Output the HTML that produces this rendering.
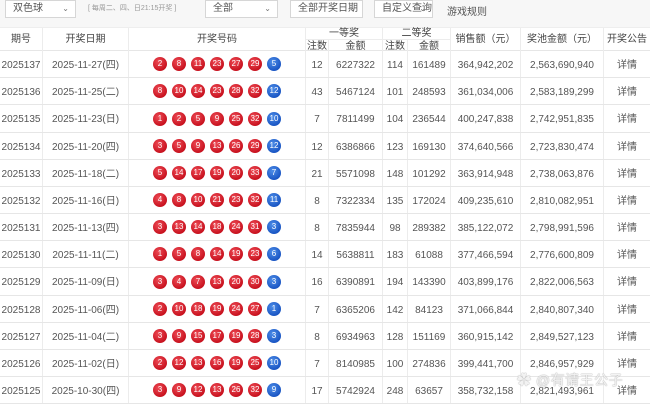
<!DOCTYPE html>
<html><head><meta charset="utf-8"><style>
*{margin:0;padding:0;box-sizing:border-box}
body{width:650px;height:403px;overflow:hidden;background:#fff;font-family:"Liberation Sans","Noto Sans CJK SC",sans-serif;color:#555;font-size:10px;position:relative}
.top{position:absolute;left:0;top:0;width:650px;height:27px;background:#f7f7f7}
.sel{position:absolute;top:0;height:18px;border:1px solid #d6d6d6;background:#fff;font-size:10px;line-height:16px;padding-left:7px;color:#555}
.sel i{position:absolute;right:6px;top:0;font-style:normal;font-size:8px;color:#777}
.row{position:absolute;left:0;width:650px;display:flex;border-bottom:1px solid #e6e6e6;background:#fff}
.c{border-right:1px solid #ececec;display:flex;align-items:center;justify-content:center;height:100%;white-space:nowrap;line-height:12px}
.c span{display:block;height:12px;line-height:12px;margin-top:3px}
.c:last-child{border-right:none}
.b{width:14px;height:14px;border-radius:50%;color:#fff;font-size:8px;line-height:14px;text-align:center;margin:0 2.5px;background:radial-gradient(circle at 40% 35%,#ee4b55,#c8121f 70%)}
.bl{background:radial-gradient(circle at 40% 35%,#4e8ee8,#1a56c4 70%)}
.hd{position:absolute;top:27px;left:0;width:650px;height:24px;background:#fff;border-bottom:1px solid #e6e6e6;border-top:1px solid #eee}
.h{position:absolute;top:0;height:23px;border-right:1px solid #ececec;display:flex;align-items:center;justify-content:center;color:#444;line-height:12px}
.h2{position:absolute;height:12px;display:flex;align-items:center;justify-content:center;color:#444;border-right:1px solid #ececec;line-height:11px}
</style></head><body>
<div class="top"></div>
<div class="sel" style="left:5px;width:71px">双色球<i>⌄</i></div>
<div style="position:absolute;left:88px;top:3px;font-size:7px;color:#999">[ 每周二、四、日21:15开奖 ]</div>
<div class="sel" style="left:205px;width:73px">全部<i>⌄</i></div>
<div class="sel" style="left:290px;width:73px">全部开奖日期<i>⌄</i></div>
<div class="sel" style="left:374px;width:59px">自定义查询<i>⌄</i></div>
<div style="position:absolute;left:447px;top:3px;font-size:10px;color:#555">游戏规则</div>
<div class="hd">
<div class="h" style="left:0;width:43px">期号</div>
<div class="h" style="left:43px;width:86px">开奖日期</div>
<div class="h" style="left:129px;width:177px">开奖号码</div>
<div class="h2" style="left:306px;top:0;width:77px;border-bottom:1px solid #ececec">一等奖</div>
<div class="h2" style="left:306px;top:12px;width:23px">注数</div>
<div class="h2" style="left:329px;top:12px;width:54px">金额</div>
<div class="h2" style="left:383px;top:0;width:68px;border-bottom:1px solid #ececec">二等奖</div>
<div class="h2" style="left:383px;top:12px;width:25px">注数</div>
<div class="h2" style="left:408px;top:12px;width:43px">金额</div>
<div class="h" style="left:451px;width:70px">销售额（元）</div>
<div class="h" style="left:521px;width:83px">奖池金额（元）</div>
<div class="h" style="left:604px;width:46px;border-right:none">开奖公告</div>
</div>
<div id="rows"></div>
<div style="position:absolute;left:517px;top:370px;font-size:14px;color:rgba(255,255,255,0.85);text-shadow:0 0 1px #aaa,0 0 1px #aaa;letter-spacing:0.5px">✿ @有请王公子</div>
<script>
var d=[
["2025137","2025-11-27(四)",[2,8,11,23,27,29],5,"12","6227322","114","161489","364,942,202","2,563,690,940"],
["2025136","2025-11-25(二)",[8,10,14,23,28,32],12,"43","5467124","101","248593","361,034,006","2,583,189,299"],
["2025135","2025-11-23(日)",[1,2,5,9,25,32],10,"7","7811499","104","236544","400,247,838","2,742,951,835"],
["2025134","2025-11-20(四)",[3,5,9,13,26,29],12,"12","6386866","123","169130","374,640,566","2,723,830,474"],
["2025133","2025-11-18(二)",[5,14,17,19,20,33],7,"21","5571098","148","101292","363,914,948","2,738,063,876"],
["2025132","2025-11-16(日)",[4,8,10,21,23,32],11,"8","7322334","135","172024","409,235,610","2,810,082,951"],
["2025131","2025-11-13(四)",[3,13,14,18,24,31],3,"8","7835944","98","289382","385,122,072","2,798,991,596"],
["2025130","2025-11-11(二)",[1,5,8,14,19,23],6,"14","5638811","183","61088","377,466,594","2,776,600,809"],
["2025129","2025-11-09(日)",[3,4,7,13,20,30],3,"16","6390891","194","143390","403,899,176","2,822,006,563"],
["2025128","2025-11-06(四)",[2,10,18,19,24,27],1,"7","6365206","142","84123","371,066,844","2,840,807,340"],
["2025127","2025-11-04(二)",[3,9,15,17,19,28],3,"8","6934963","128","151169","360,915,142","2,849,527,123"],
["2025126","2025-11-02(日)",[2,12,13,16,19,25],10,"7","8140985","100","274836","399,441,700","2,846,957,929"],
["2025125","2025-10-30(四)",[3,9,12,13,26,32],9,"17","5742924","248","63657","358,732,158","2,821,493,961"]];
var w=[43,86,177,23,54,25,43,70,83,46],h="";
d.forEach(function(r,i){var t=51+Math.round(i*27.17);var nt=51+Math.round((i+1)*27.17);
var balls=r[2].map(function(n){return '<div class="b">'+n+'</div>'}).join('')+'<div class="b bl">'+r[3]+'</div>';
var cells=[r[0],r[1],balls,r[4],r[5],r[6],r[7],r[8],r[9],"详情"];
h+='<div class="row" style="top:'+t+'px;height:'+(nt-t)+'px">'+cells.map(function(c,j){return '<div class="c" style="width:'+w[j]+'px">'+(j==2?c:'<span>'+c+'</span>')+'</div>'}).join('')+'</div>';});
document.getElementById("rows").innerHTML=h;
</script>
</body></html>
